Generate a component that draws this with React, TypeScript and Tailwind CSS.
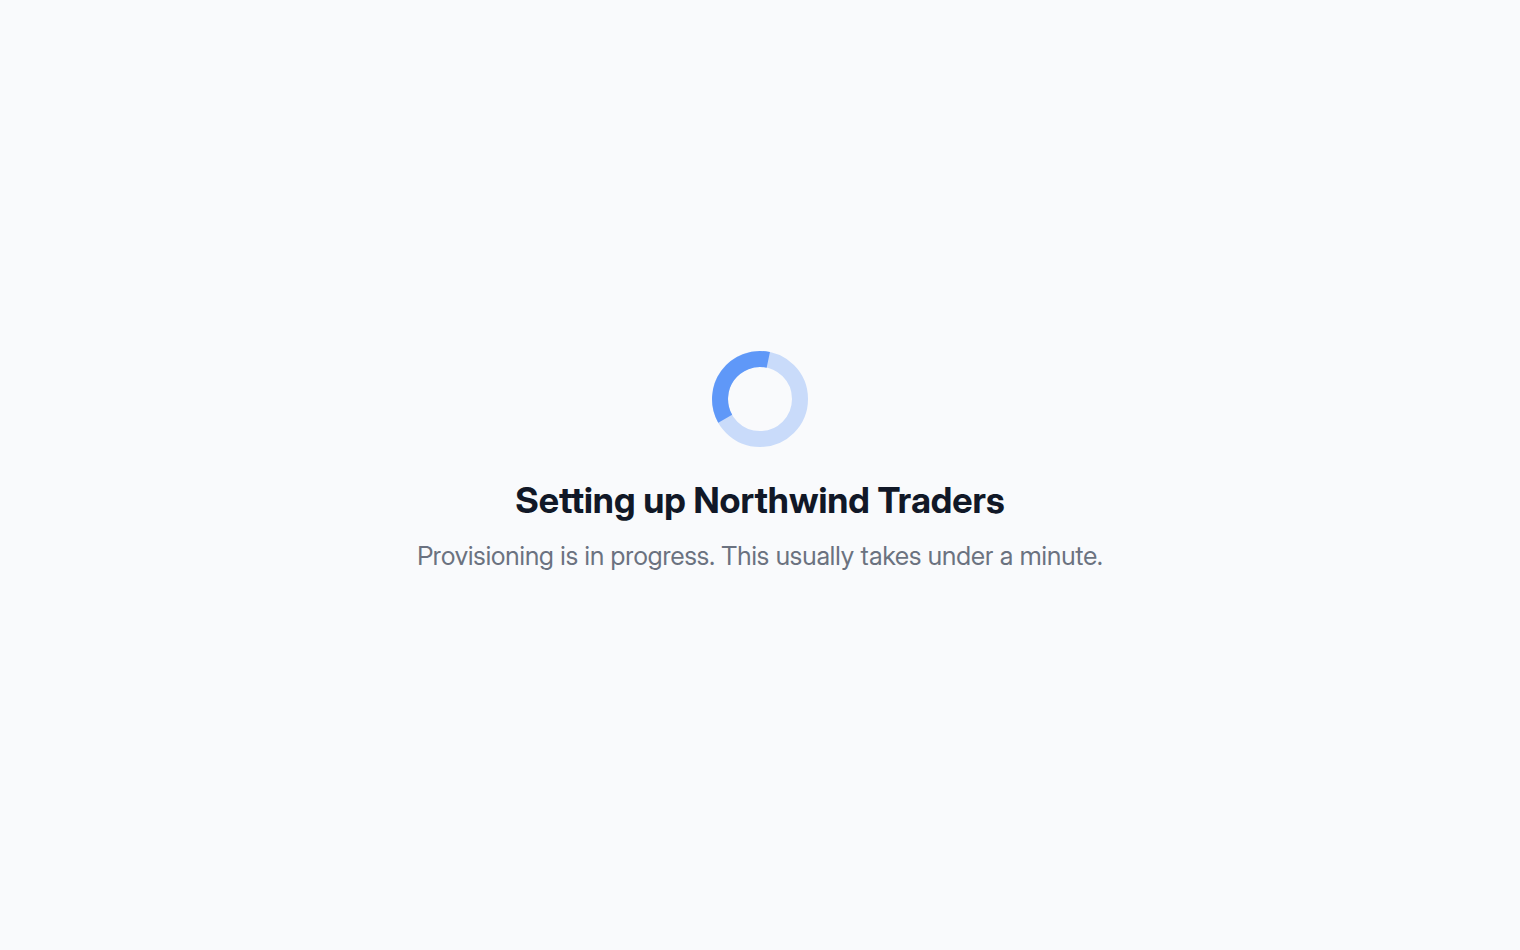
function Spinner() {
  return (
    <svg viewBox="0 0 96 96" className="size-24" fill="none" strokeWidth="16" aria-hidden="true">
      <circle cx="48" cy="48" r="40" stroke="#c9dbfa" />
      <path d="M13.2 67.7A40 40 0 0 1 56.3 8.9" stroke="#5f98f8" />
    </svg>
  );
}

export default function App() {
  return (
    <main className="flex min-h-screen flex-col items-center justify-center bg-[#f9fafc] px-6 pb-6 text-center font-['Inter_Display','Inter',sans-serif]">
      <div role="status" className="flex flex-col items-center">
        <Spinner />
        <h1 className="mt-8 text-[36px] leading-[42px] font-bold text-[#111827]">
          Setting up Northwind Traders
        </h1>
        <p className="mt-4 text-[26px] leading-[38px] text-[#6b7280]">
          Provisioning is in progress. This usually takes under a minute.
        </p>
      </div>
    </main>
  );
}
